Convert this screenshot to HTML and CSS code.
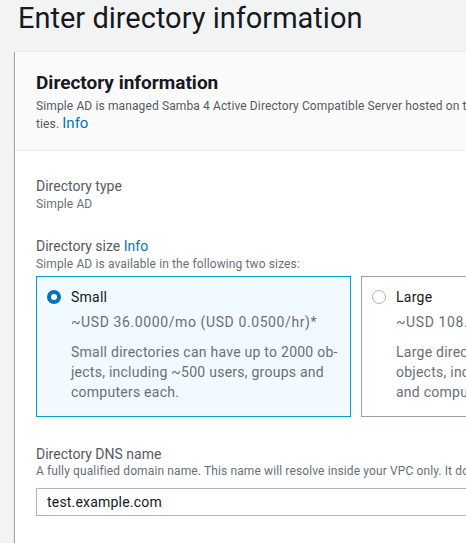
FILE: index.html
```html
<!DOCTYPE html>
<html lang="en">
<head>
<meta charset="utf-8">
<title>Enter directory information</title>
<link rel="stylesheet" href="styles.css">
</head>
<body>
<div class="page">
  <h1 class="page-title">Enter directory information</h1>
  <div class="container">
    <div class="container-header">
      <h2 class="container-title">Directory information</h2>
      <p class="container-desc">Simple AD is managed Samba 4 Active Directory Compatible Server hosted on the AWS Cloud. It provides a subset of Active Directory features and capabili-<br>ties. <a class="info-link info-lg" href="#">Info</a></p>
    </div>
    <div class="container-body">
      <div class="field">
        <div class="label">Directory type</div>
        <div class="value">Simple AD</div>
      </div>
      <div class="field field-size">
        <div class="label">Directory size <a class="info-link" href="#">Info</a></div>
        <div class="desc">Simple AD is available in the following two sizes:</div>
        <div class="tiles">
          <label class="tile tile-selected">
            <span class="radio radio-checked"></span>
            <span class="tile-content">
              <span class="tile-name">Small</span>
              <span class="tile-price">~USD 36.0000/mo (USD 0.0500/hr)*</span>
              <span class="tile-text">Small directories can have up to 2000 ob-<br>jects, including ~500 users, groups and<br>computers each.</span>
            </span>
          </label>
          <label class="tile">
            <span class="radio"></span>
            <span class="tile-content">
              <span class="tile-name">Large</span>
              <span class="tile-price">~USD 108.0000/mo (USD 0.1500/hr)*</span>
              <span class="tile-text">Large directories can have up to 100,000<br>objects, including ~5000 users, groups<br>and computers each.</span>
            </span>
          </label>
        </div>
      </div>
      <div class="field field-dns">
        <div class="label">Directory DNS name</div>
        <div class="desc desc-tight">A fully qualified domain name. This name will resolve inside your VPC only. It does not need to be publicly resolvable.</div>
        <div class="input">test.example.com</div>
      </div>
      <div class="field field-next">
        <div class="label">Directory NetBIOS name - <i>optional</i></div>
      </div>
    </div>
  </div>
</div>
</body>
</html>
```
FILE: styles.css
```css
html, body {
  margin: 0;
  padding: 0;
}
body {
  background: #f2f3f3;
  font-family: Roboto, "Liberation Sans", sans-serif;
  color: #16191f;
  overflow: hidden;
  width: 466px;
  height: 543px;
}
.page {
  width: 1000px;
  padding-left: 15px;
}
.page-title {
  margin: 0 0 15px 3px;
  font-size: 29px;
  line-height: 36px;
  font-weight: 400;
  color: #16191f;
}
.container {
  background: #fff;
  border-top: 1px solid #eaeded;
  box-shadow: 0 1px 1px 0 rgba(0, 28, 36, 0.3), 1px 1px 1px 0 rgba(0, 28, 36, 0.15), -1px 1px 1px 0 rgba(0, 28, 36, 0.3);
}
.container-header {
  background: #fafafa;
  border-bottom: 1px solid #eaeded;
  padding: 20px 20px 17px 21px;
}
.container-title {
  margin: 0;
  font-size: 19px;
  line-height: 22px;
  font-weight: 700;
}
.container-desc {
  margin: 4px 0 0;
  font-size: 12px;
  letter-spacing: 0.12px;
  line-height: 17px;
  color: #545b64;
  white-space: nowrap;
}
.info-link {
  color: #0073bb;
  text-decoration: none;
}
.info-lg {
  font-size: 15px;
  letter-spacing: 0;
}
.container-body {
  padding: 25px 20px 20px 21px;
}
.label {
  font-size: 14px;
  line-height: 20px;
  color: #545b64;
}
.value, .desc {
  font-size: 12px;
  line-height: 16px;
  letter-spacing: 0.12px;
  color: #687078;
}
.desc-tight {
  line-height: 14px;
  white-space: nowrap;
}
.field-size {
  margin-top: 24px;
}
.tiles {
  display: grid;
  grid-template-columns: 315px 315px;
  gap: 10px;
  margin-top: 4px;
}
.tile {
  display: flex;
  gap: 10px;
  border: 1px solid #95a5a6;
  padding: 10px 10px 14px;
  background: #fff;
}
.tile-selected {
  border-color: #00a1c9;
  background: #f1faff;
}
.radio {
  flex: none;
  box-sizing: border-box;
  width: 14px;
  height: 14px;
  margin-top: 3px;
  border-radius: 50%;
  border: 1px solid #aab7b8;
  background: #fff;
}
.radio-checked {
  border: 4px solid #0073bb;
}
.tile-content {
  display: flex;
  flex-direction: column;
  font-size: 14px;
  line-height: 20px;
  letter-spacing: 0.25px;
}
.tile-name {
  color: #16191f;
}
.tile-price {
  margin-top: 5px;
  color: #687078;
  white-space: nowrap;
  letter-spacing: 0.6px;
}
.tile-text {
  margin-top: 10px;
  color: #687078;
  white-space: nowrap;
}
.field-dns {
  margin-top: 27px;
}
.input {
  box-sizing: border-box;
  width: 700px;
  height: 28px;
  margin-top: 10px;
  border: 1px solid #aab7b8;
  padding: 0 10px;
  font-size: 14px;
  line-height: 26px;
  letter-spacing: 0.2px;
  color: #16191f;
  background: #fff;
}
.field-next {
  margin-top: 28px;
}
```
